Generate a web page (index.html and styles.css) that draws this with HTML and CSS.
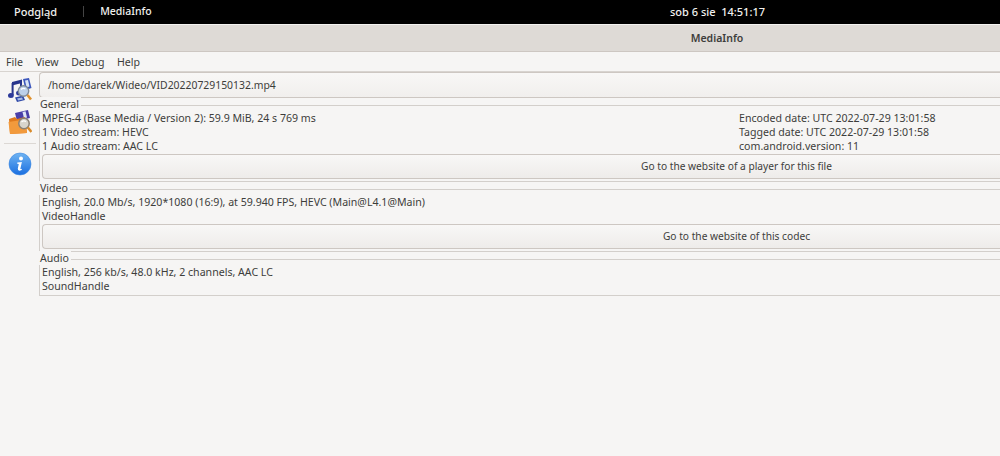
FILE: index.html
```html
<!DOCTYPE html>
<html lang="en">
<head>
    <meta charset="UTF-8">
    <title>MediaInfo</title>
    <link rel="stylesheet" href="styles.css">
</head>
<body>
    <div class="topbar">
        <div class="topleft">
            <span class="activities">Podgląd</span>
            <span class="divider"></span>
            <span class="appname">MediaInfo</span>
        </div>
        <span class="clock">sob 6 sie&nbsp; 14:51:17</span>
    </div>

    <div class="titlebar">MediaInfo</div>

    <div class="menubar">
        <span>File</span>
        <span>View</span>
        <span>Debug</span>
        <span>Help</span>
    </div>

    <div class="main">
        <div class="sidebar">
            <!-- easy view: notes, film strip and magnifier -->
            <svg class="tool" viewBox="0 0 24 24">
                <path d="M4 4 L14 1.5 L14 5 L4 7.5 Z" fill="#27358c"/>
                <path d="M4.6 5 L4.6 17 M13 3 L13 14" stroke="#27358c" stroke-width="2" fill="none"/>
                <ellipse cx="2.9" cy="17.5" rx="2.9" ry="2.5" fill="#2c3a9a"/>
                <ellipse cx="11" cy="15" rx="2.9" ry="2.5" fill="#2c3a9a"/>
                <path d="M15 1 L21 0 L23.5 10 L17.5 12 Z" fill="#3c57bc"/>
                <path d="M17 2.5 L20 2 L21.5 8.5 L18.6 9.5 Z" fill="#d7e3f6"/>
                <path d="M7 19.5 L15 17.5 L17 22 L9 24 Z" fill="#2f4aa8"/>
                <path d="M9 20.5 L14 19.4 L15 21.5 L10.2 22.6 Z" fill="#a9bde6"/>
                <circle cx="15.5" cy="13" r="5.2" fill="#bcd0ea" stroke="#7f8a98" stroke-width="1.4"/>
                <path d="M13 11.5 Q15 9.5 17.5 11" stroke="#fff" stroke-width="1.2" fill="none"/>
                <path d="M19.5 17 L23 21.5" stroke="#e0912c" stroke-width="2.6"/>
            </svg>
            <!-- folder view: folder, film strip and magnifier -->
            <svg class="tool" viewBox="0 0 24 24">
                <path d="M7 3 L20 0 L22 8 L9 11 Z" fill="#4a3fa8"/>
                <path d="M14.5 2 L17.5 1.3 L19 7.5 L16 8.2 Z" fill="#dfe6f6"/>
                <path d="M1 9 L7 7 L9 9 L17 7 L19 23 L2 24 Z" fill="#e0791c"/>
                <path d="M0.5 12 L17 9.5 L19 23 L2 24 Z" fill="#f29a3c"/>
                <circle cx="16" cy="13.5" r="5.2" fill="#d8d5cd" stroke="#8a8074" stroke-width="1.5"/>
                <path d="M13.5 12 Q15.5 10 18 11.5" stroke="#fff" stroke-width="1.2" fill="none"/>
                <path d="M19.8 17.5 L23.5 22" stroke="#d88a2a" stroke-width="2.6"/>
            </svg>
            <div class="toolsep"></div>
            <!-- info button -->
            <svg class="tool" viewBox="0 0 24 24">
                <defs>
                    <linearGradient id="infoblue" x1="0" y1="0" x2="0" y2="1">
                        <stop offset="0" stop-color="#6fb4f2"/>
                        <stop offset="1" stop-color="#1a6fe0"/>
                    </linearGradient>
                </defs>
                <circle cx="12" cy="12" r="11" fill="url(#infoblue)" stroke="#3a86e0" stroke-width="0.6"/>
                <circle cx="13" cy="6.6" r="2" fill="#fff"/>
                <path d="M9.3 10.6 L13.9 10 L12.4 16.4 Q12.2 17.6 13.9 16.8 L13.7 18 Q9.5 19.8 9.8 16.6 L10.8 12 L9.2 11.8 Z" fill="#fff"/>
            </svg>
        </div>

        <div class="content">
            <div class="pathbox">/home/darek/Wideo/VID20220729150132.mp4</div>

            <div class="group">
                <div class="legend">General</div>
                <div class="frame">
                    <div class="columns">
                        <div class="rows">
                            <div>MPEG-4 (Base Media / Version 2): 59.9 MiB, 24 s 769 ms</div>
                            <div>1 Video stream: HEVC</div>
                            <div>1 Audio stream: AAC LC</div>
                        </div>
                        <div class="rows">
                            <div>Encoded date: UTC 2022-07-29 13:01:58</div>
                            <div>Tagged date: UTC 2022-07-29 13:01:58</div>
                            <div>com.android.version: 11</div>
                        </div>
                    </div>
                    <div class="btn">Go to the website of a player for this file</div>
                </div>
            </div>

            <div class="group">
                <div class="legend">Video</div>
                <div class="frame">
                    <div class="rows">
                        <div>English, 20.0 Mb/s, 1920*1080 (16:9), at 59.940 FPS, HEVC (Main@L4.1@Main)</div>
                        <div>VideoHandle</div>
                    </div>
                    <div class="btn">Go to the website of this codec</div>
                </div>
            </div>

            <div class="group">
                <div class="legend">Audio</div>
                <div class="frame last">
                    <div class="rows">
                        <div>English, 256 kb/s, 48.0 kHz, 2 channels, AAC LC</div>
                        <div>SoundHandle</div>
                    </div>
                </div>
            </div>
        </div>
    </div>
</body>
</html>
```

FILE: styles.css
```css
* {
    margin: 0;
    padding: 0;
    box-sizing: border-box;
}

body {
    background-color: #f6f5f4;
    color: #3d3d3b;
    font-family: "Noto Sans", sans-serif;
    font-size: 10.6px;
    height: 456px;
    overflow: hidden;
}

.topbar {
    background-color: #000;
    color: #f0f0ee;
    height: 24px;
    padding-bottom: 2px;
    font-size: 11px;
    font-weight: 500;
    display: grid;
    grid-template-columns: 670px 1fr;
    align-items: center;
}

.topleft {
    display: flex;
    align-items: center;
    padding-left: 14px;
}

.divider {
    width: 1px;
    height: 11px;
    background-color: #444;
    margin: 0 16px 0 26px;
}

.appname {
    font-size: 10.5px;
}

.titlebar {
    background-color: #dedad6;
    border-top: 1px solid #f4f3f1;
    border-bottom: 1px solid #cdc7c2;
    height: 28px;
    font-size: 10.5px;
    font-weight: 600;
    display: flex;
    align-items: center;
    justify-content: center;
    padding: 0 0 1px 434px;
}

.menubar {
    height: 20px;
    display: flex;
    align-items: center;
    gap: 12.5px;
    padding-left: 6px;
    border-bottom: 1px solid #d8d4d0;
}

.main {
    display: flex;
}

.sidebar {
    width: 39px;
    flex-shrink: 0;
    display: flex;
    flex-direction: column;
    align-items: center;
    padding-top: 6px;
}

.tool {
    width: 24px;
    height: 24px;
    margin-bottom: 8px;
}

.toolsep {
    width: 32px;
    height: 1px;
    background-color: #dcd8d4;
    margin: 1px 0 8px;
}

.content {
    flex: 1;
}

.pathbox {
    height: 26px;
    border: 1px solid #cdc7c2;
    border-right: none;
    border-radius: 4px 0 0 4px;
    background-image: linear-gradient(#f8f7f6, #f1efed);
    font-size: 10.4px;
    padding: 0 0 1px 8px;
    display: flex;
    align-items: center;
}

.group {
    position: relative;
    padding-top: 7px;
}

.legend {
    position: absolute;
    top: -1px;
    left: 0;
    height: 14px;
    line-height: 14px;
    background-color: #f6f5f4;
    padding: 0 2px 0 1px;
}

.frame {
    border: 1px solid #d3cfcb;
    border-right: none;
    padding: 5px 0 0 2px;
}

.last {
    padding-bottom: 2px;
}

.columns {
    display: grid;
    grid-template-columns: 697px 1fr;
}

.rows {
    line-height: 14px;
}

/* the real window runs on past the screen edge, so the label sits right of centre */
.btn {
    height: 25px;
    margin: 1px 0 2px;
    padding: 0 0 1px 430px;
    border: 1px solid #cdc7c2;
    border-right: none;
    border-radius: 4px 0 0 4px;
    background-image: linear-gradient(#f8f7f6, #eeecea);
    font-size: 10.2px;
    display: flex;
    align-items: center;
    justify-content: center;
}
```
